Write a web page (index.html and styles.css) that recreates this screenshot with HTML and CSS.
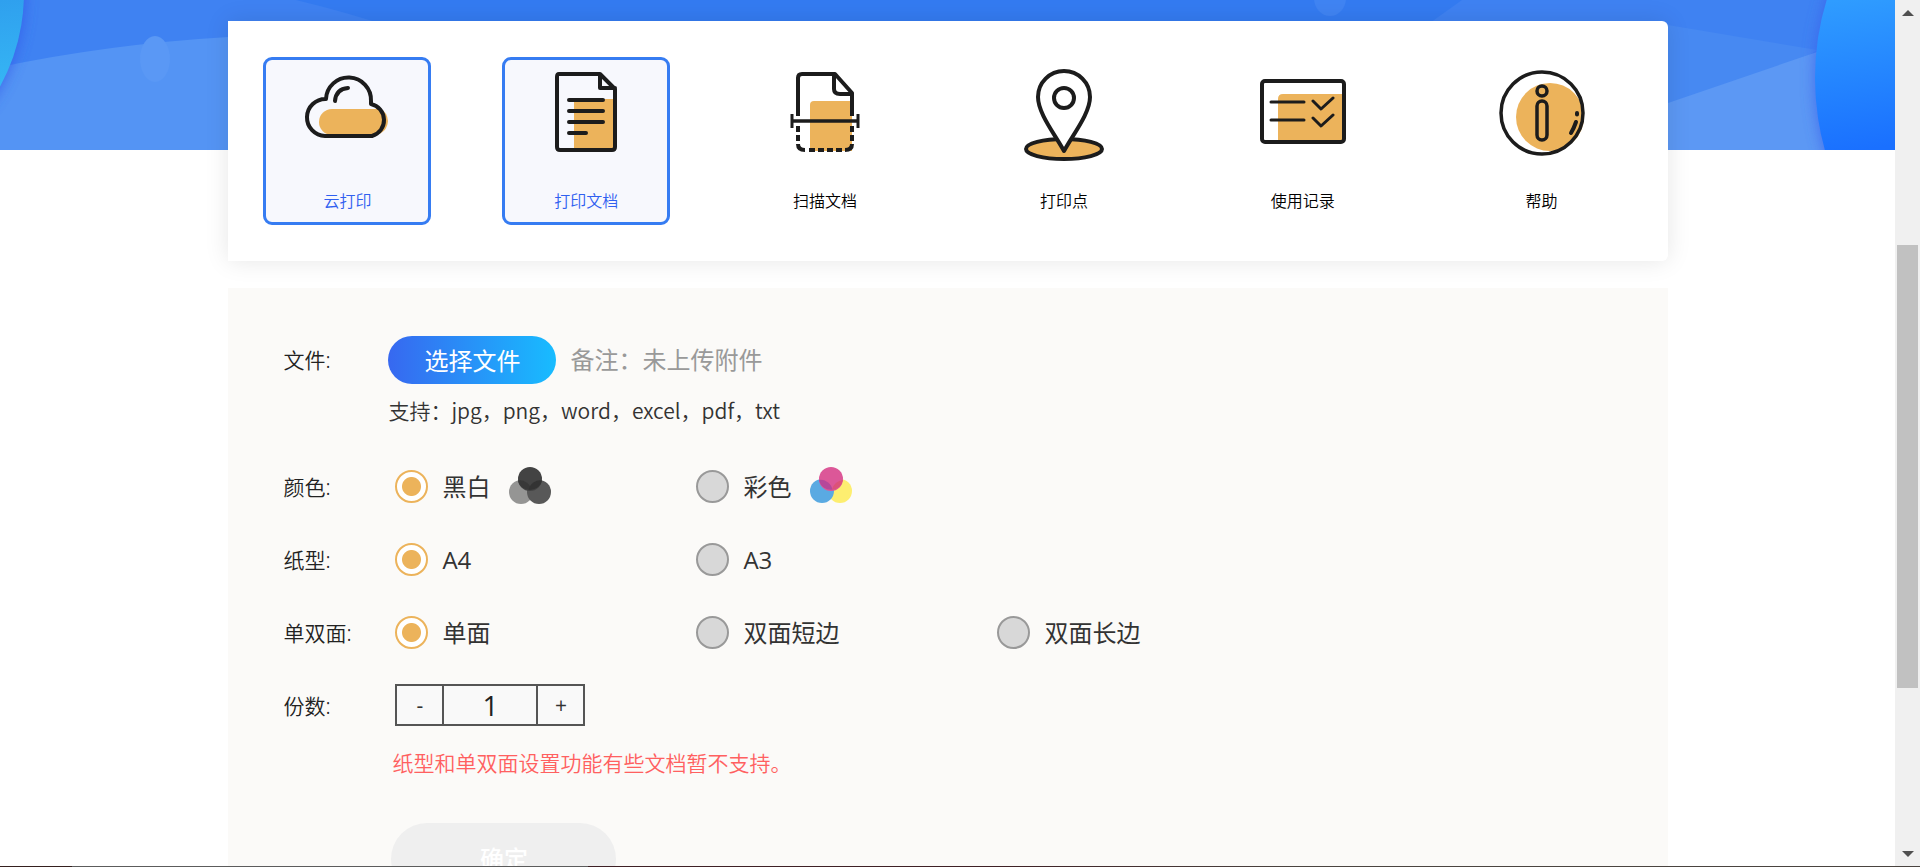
FILE: index.html
```
<!DOCTYPE html>
<html lang="zh-CN">
<head>
<meta charset="utf-8">
<title>云打印</title>
<link rel="stylesheet" href="styles.css">
</head>
<body>
<div class="window">
  <div class="page">
    <svg class="banner" viewBox="0 0 1895 150" preserveAspectRatio="none" aria-hidden="true">
      <defs>
        <linearGradient id="disc-right" gradientUnits="userSpaceOnUse" x1="1840" y1="0" x2="1862" y2="150">
          <stop offset="0" stop-color="#2f9cff"/><stop offset="1" stop-color="#1a70ff"/>
        </linearGradient>
        <linearGradient id="disc-left" gradientUnits="userSpaceOnUse" x1="0" y1="0" x2="10" y2="80">
          <stop offset="0" stop-color="#2fa0ee"/><stop offset="1" stop-color="#35b4f4"/>
        </linearGradient>
        <filter id="glow" x="-50%" y="-50%" width="200%" height="200%"><feGaussianBlur stdDeviation="7"/></filter>
      </defs>
      <rect width="1895" height="150" fill="#3f82f2"/>
      <path d="M296 0 Q350 13 400 30 H1420 L1462 0Z" fill="#347bf1"/>
      <path d="M0 67 Q110 44 228 37 L1000 37 V150 H0Z" fill="#5494f4"/>
      <ellipse cx="155" cy="59" rx="15" ry="23" fill="#5a98f5"/>
      <ellipse cx="1330" cy="-2" rx="16" ry="18" fill="#4084f3"/>
      <path d="M1668 25 L1817 50 L1668 150Z" fill="#4789f2"/>
      <path d="M1600 127 L1668 103 L1817 52 H1895 V150 H1600Z" fill="#5c98f4"/>
      <ellipse cx="-118" cy="-8" rx="143" ry="170" fill="#3254e8" opacity=".7" filter="url(#glow)"/>
      <ellipse cx="1970" cy="78" rx="156" ry="205" fill="#3a5fea" opacity=".7" filter="url(#glow)"/>
      <ellipse cx="-118" cy="-8" rx="142" ry="170" fill="url(#disc-left)"/>
      <ellipse cx="1970" cy="78" rx="155" ry="205" fill="url(#disc-right)"/>
    </svg>
    <main class="content">
      <nav class="menu">
        <a class="tile active" href="#">
          <svg class="icon" viewBox="0 0 90 90" fill="none" stroke="#1c1c1c" stroke-width="4" stroke-linecap="round" stroke-linejoin="round">
            <path d="M30 39 H79 Q85 42 86 51 Q85 63 73 65 H30 A13 13 0 0 1 30 39Z" fill="#ecb35b" stroke="none"/>
            <path d="M23 66 H70 A16.500 16.500 0 0 0 69 34 V31 A22 22 0 0 0 24 29 A18.500 18.500 0 0 0 23 66Z"/>
            <path d="M33 31 Q34 19 46 18"/>
          </svg>
          <span>云打印</span>
        </a>
        <a class="tile active" href="#">
          <svg class="icon" viewBox="0 0 90 90" fill="none" stroke="#1c1c1c" stroke-width="4" stroke-linecap="round" stroke-linejoin="round">
            <path d="M33 29 H73 V80 H33Z" fill="#ecb35b" stroke="none"/>
            <path d="M18 4 H59 L74 19 V77 Q74 80 71 80 H19 Q16 80 16 77 V7 Q16 4 18 4Z M59 4 V18 H74 M28 30 H62 M28 41 H62 M28 52 H62 M28 63 H45"/>
          </svg>
          <span>打印文档</span>
        </a>
        <a class="tile" href="#">
          <svg class="icon" viewBox="0 0 90 90" fill="none" stroke="#1c1c1c" stroke-width="4" stroke-linejoin="round">
            <path d="M30 81 V35 Q30 31 34 31 H72 V81Z" fill="#ecb35b" stroke="none"/>
            <path d="M18 46 V8 Q18 4 22 4 H55 L72 23 V46 M54 4 V19 Q54 24 60 24 H72"/>
            <path d="M12 51 H78" stroke-width="3.500"/><path d="M12 44 V58 M78 44 V58" stroke-width="3"/>
            <path d="M18 56 V62 M18 65 V71 M72 56 V62 M72 65 V71 M18 74 Q18 80 25 80 M72 74 Q72 80 65 80 M29 80 H35 M38 80 H44 M47 80 H53 M56 80 H62"/>
          </svg>
          <span>扫描文档</span>
        </a>
        <a class="tile" href="#">
          <svg class="icon" viewBox="0 0 90 90" fill="none" stroke="#1c1c1c" stroke-width="4" stroke-linejoin="round">
            <ellipse cx="45" cy="79" rx="38" ry="10" fill="#ecb35b"/>
            <path d="M45 81 C35 63 19 43 19 27 A26 26 0 0 1 71 27 C71 43 55 63 45 81Z" fill="#fff"/>
            <circle cx="45" cy="28" r="10"/>
          </svg>
          <span>打印点</span>
        </a>
        <a class="tile" href="#">
          <svg class="icon" viewBox="0 0 90 90" fill="none" stroke="#1c1c1c" stroke-width="4" stroke-linecap="round" stroke-linejoin="round">
            <path d="M20 72 V29 Q20 24 25 24 H86 V72Z" fill="#ecb35b" stroke="none"/>
            <rect x="4" y="11" width="82" height="61" rx="3"/>
            <path d="M13 32 H46 M13 50 H46 M55 31 L63 39 L75 28 M55 48 L63 56 L75 45" stroke-width="3"/>
          </svg>
          <span>使用记录</span>
        </a>
        <a class="tile" href="#">
          <svg class="icon" viewBox="0 0 90 90" fill="none" stroke="#1c1c1c" stroke-width="3.500" stroke-linecap="round">
            <circle cx="53" cy="47" r="34" fill="#ecb35b" stroke="none"/>
            <circle cx="45" cy="43" r="41"/>
            <circle cx="45" cy="21" r="5"/>
            <rect x="40" y="31" width="10" height="39" rx="5"/>
            <path d="M80 43 V44.500 M79 52 Q77 58 74 63" stroke-width="4"/>
          </svg>
          <span>帮助</span>
        </a>
      </nav>

      <form class="panel">
        <div class="row file-row">
          <span class="name">文件:</span>
          <div class="file">
            <div class="file-line">
              <button type="button" class="choose">选择文件</button>
              <span class="remark">备注：未上传附件</span>
            </div>
            <p class="formats">支持：jpg，png，word，excel，pdf，txt</p>
          </div>
        </div>
        <div class="row" role="radiogroup" aria-label="颜色">
          <span class="name">颜色:</span>
          <div class="options">
            <label class="option"><input type="radio" name="color" checked>黑白
              <svg class="swatch" viewBox="0 0 42 42"><circle cx="12" cy="26" r="12" fill="#959594"/><circle cx="30" cy="26" r="12" fill="#585858"/><circle cx="21" cy="13" r="12" fill="#434343"/><path d="M9 14.400 A12 12 0 0 1 22.500 23.700 A12 12 0 0 1 9 14.400Z" fill="#383838"/><path d="M33 14.400 A12 12 0 0 0 19.500 23.700 A12 12 0 0 0 33 14.400Z" fill="#333"/></svg>
            </label>
            <label class="option"><input type="radio" name="color">彩色
              <svg class="swatch" viewBox="0 0 42 42"><circle cx="30" cy="25" r="12" fill="#fdee70"/><circle cx="12" cy="25" r="12" fill="#5aaae2"/><circle cx="21" cy="13" r="12" fill="#dc5798"/><path d="M9 14 A12 12 0 0 1 22.500 23.700 A12 12 0 0 1 9 14Z" fill="#b5489a"/><path d="M33 14 A12 12 0 0 0 22 23.700 A12 12 0 0 0 33 14Z" fill="#dc5278"/></svg>
            </label>
          </div>
        </div>
        <div class="row" role="radiogroup" aria-label="纸型">
          <span class="name">纸型:</span>
          <div class="options">
            <label class="option"><input type="radio" name="paper" checked>A4</label>
            <label class="option"><input type="radio" name="paper">A3</label>
          </div>
        </div>
        <div class="row" role="radiogroup" aria-label="单双面">
          <span class="name">单双面:</span>
          <div class="options">
            <label class="option"><input type="radio" name="sides" checked>单面</label>
            <label class="option"><input type="radio" name="sides">双面短边</label>
            <label class="option"><input type="radio" name="sides">双面长边</label>
          </div>
        </div>
        <div class="row">
          <label class="name" for="copies">份数:</label>
          <div class="counter">
            <button type="button" aria-label="减少">-</button>
            <input id="copies" type="text" value="1">
            <button type="button" aria-label="增加">+</button>
          </div>
        </div>
        <p class="warning">纸型和单双面设置功能有些文档暂不支持。</p>
        <button type="button" class="submit" disabled>确定</button>
      </form>
    </main>
  </div>
  <div class="scrollbar" aria-hidden="true">
    <svg class="arrow" viewBox="0 0 12 6"><path d="M0 6 L6 0 L12 6Z"/></svg>
    <div class="track"><div class="thumb"></div></div>
    <svg class="arrow" viewBox="0 0 12 6"><path d="M0 0 L6 6 L12 0Z"/></svg>
  </div>
  <div class="edge"></div>
</div>
</body>
</html>
```
FILE: styles.css
```
* { box-sizing: border-box; }

body {
  margin: 0;
  color: #333;
  background: #fff;
  font-family: "Open Sans", "Noto Sans CJK SC", sans-serif;
  font-size: 24px;
}

button, input { font-family: inherit; color: inherit; }
p { margin: 0; }

.window {
  position: relative;
  display: grid;
  grid-template-columns: 1fr 25px;
  height: 100vh;
  overflow: hidden;
}

.page { position: relative; overflow: hidden; }

.banner {
  position: absolute;
  top: 0;
  left: 0;
  width: 100%;
  height: 150px;
}

.content {
  position: relative;
  width: 76%;
  margin: 0 auto;
  padding: 21px 0 0 1px;
}

.menu {
  display: flex;
  justify-content: space-between;
  padding: 36px 42px 36px 35px;
  background: #fff;
  border-radius: 0 6px 6px 0;
  box-shadow: 0 0 24px rgba(0, 0, 0, .1);
}

.tile {
  display: flex;
  flex-direction: column;
  align-items: center;
  justify-content: space-between;
  width: 168px;
  height: 168px;
  padding: 10px 0 9px;
  border: 3px solid transparent;
  border-radius: 9px;
  color: #000;
  font-size: 16px;
  font-weight: 350;
  line-height: 24px;
  text-decoration: none;
}

.tile.active {
  border-color: #367cf2;
  background: #f7f8fd;
  color: #3060f0;
}

.icon { width: 90px; height: 90px; overflow: visible; }

.panel {
  min-height: 640px;
  margin-top: 27px;
  padding: 48px 55px;
  background: #fbfaf8;
}

.row {
  display: grid;
  grid-template-columns: 112px 1fr;
  align-items: center;
  height: 73px;
}

.file-row { align-items: start; height: 114px; }

.name {
  padding-bottom: 2px;
  color: #222;
  font-family: "Noto Sans", "Noto Sans CJK SC", sans-serif;
  font-size: 21px;
  font-weight: 350;
}

.file-row .name { line-height: 48px; }

.file { margin-left: -7px; }

.file-line {
  display: flex;
  align-items: center;
  gap: 14px;
}

.choose {
  width: 168px;
  height: 48px;
  padding: 0 0 2px;
  border: 0;
  border-radius: 24px;
  background: linear-gradient(90deg, #3768f0, #18bcff);
  color: #fff;
  font-size: 24px;
}

.remark { color: #999; line-height: 48px; }

.formats {
  margin-top: 11px;
  font-family: "Noto Sans CJK SC", sans-serif;
  font-size: 21px;
  font-weight: 350;
  line-height: 30px;
}

.options { display: grid; grid-template-columns: repeat(auto-fill, 301px); }

.option { display: flex; align-items: center; line-height: 36px; }

.option input {
  appearance: none;
  width: 33px;
  height: 33px;
  margin: 0 14px 0 0;
  border: 2px solid #999;
  border-radius: 50%;
  background: #d8d8d8;
}

.option input:checked {
  border-color: #ecb35b;
  background: radial-gradient(circle, #ecb35b 9px, #fff 10px);
}

.swatch { width: 42px; height: 42px; margin-left: 19px; }

.counter {
  display: flex;
  width: 190px;
  height: 42px;
  margin-bottom: 2px;
  border: 2px solid #555;
}

.counter button {
  width: 45px;
  padding: 0;
  border: 0;
  background: #f9f9f9;
  font-size: 21px;
}

.counter input {
  flex: 1;
  min-width: 0;
  padding: 0;
  border: solid #555;
  border-width: 0 2px;
  border-radius: 0;
  background: #f9f9f9;
  color: #222;
  font-size: 28px;
  text-align: center;
}

.warning {
  margin: 6px 0 0 109px;
  color: #ff6060;
  font-size: 21px;
  font-weight: 350;
  line-height: 30px;
}

.submit {
  display: block;
  width: 225px;
  height: 72px;
  margin: 45px 0 0 108px;
  padding: 0 0 4px;
  border: 0;
  border-radius: 36px;
  background: #efefef;
  color: #fff;
  font-size: 24px;
  font-weight: 500;
}

.scrollbar {
  display: flex;
  flex-direction: column;
  align-items: center;
  padding: 10px 0;
  background: #f0f0f0;
}

.arrow { width: 12px; height: 6px; fill: #505050; }

.track { flex: 1; width: 21px; }

.thumb { height: 53%; margin-top: 229px; background: #c1c1c1; }

.edge {
  position: absolute;
  right: 0;
  bottom: 0;
  left: 0;
  height: 1px;
  background: linear-gradient(90deg, #35201f 72px, #5c5c5c 72px 588px, #3e2025 588px 1000px, #4a4440 1300px);
}
```
